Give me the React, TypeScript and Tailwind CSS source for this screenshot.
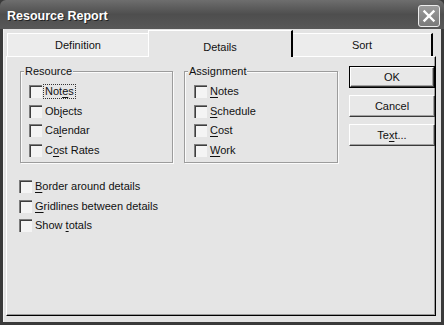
import React from "react";

const font = { fontFamily: '"Liberation Sans", Arial, sans-serif' };

function U({ children }: { children: React.ReactNode }) {
  return <span className="underline underline-offset-[2px] decoration-[1px]">{children}</span>;
}

function Box() {
  return (
    <span className="w-[13px] h-[13px] shrink-0 bg-[#f4f4f4] border-t border-l border-[#7c7c7c] border-b-white border-r-white shadow-[inset_1px_1px_0_#3e3e3e]" />
  );
}

function Check({ children, focus = false }: { children: React.ReactNode; focus?: boolean }) {
  return (
    <div className="h-[19.5px] flex items-center gap-px">
      <Box />
      <span
        className={
          "px-px leading-[13px] border " +
          (focus ? "border-dotted border-[#333]" : "border-transparent")
        }
      >
        {children}
      </span>
    </div>
  );
}

function Group({
  title,
  width,
  pl,
  children,
}: {
  title: string;
  width: string;
  pl: string;
  children: React.ReactNode;
}) {
  return (
    <div
      className={
        "relative h-[92px] border border-[#9c9c9c] shadow-[1px_1px_0_#fbfbfb,inset_1px_1px_0_#fbfbfb] pt-[10px] " +
        width +
        " " +
        pl
      }
    >
      <span className="absolute -top-[8px] left-[3px] px-px bg-[#e5e5e5] leading-[14px]">{title}</span>
      {children}
    </div>
  );
}

function Button({ children, def = false }: { children: React.ReactNode; def?: boolean }) {
  return (
    <div
      className={
        "w-[86px] h-[22px] flex items-center justify-center " +
        (def ? "border border-black" : "")
      }
    >
      <div className="w-full h-full flex items-center justify-center bg-[#e8e8e8] border-t border-l border-white border-b border-r border-b-[#3a3a3a] border-r-[#3a3a3a] shadow-[inset_-1px_-1px_0_#a2a2a2]">
        {children}
      </div>
    </div>
  );
}

export default function App() {
  return (
    <div
      className="w-[444px] h-[325px] bg-[#3a3a3a] flex flex-col text-[11px] text-[#111]"
      style={font}
    >
      <div className="h-[29px] shrink-0 flex items-start bg-gradient-to-b from-[#6e6e6e] via-[#4e4e4e] to-[#585858] rounded-t-[6px]">
        <span className="ml-[7px] mt-[9px] text-[12.5px] font-bold text-white leading-[15px] [text-shadow:1px_1px_0_#222]">
          Resource Report
        </span>
        <div className="ml-auto mr-[4px] mt-[5px] w-[22px] h-[22px] rounded-[3px] border border-[#ececec] bg-gradient-to-b from-[#9c9c9c] to-[#7a7a7a] flex items-center justify-center">
          <svg width="14" height="14" viewBox="0 0 14 14">
            <path d="M2.5 2.5 L11.5 11.5 M11.5 2.5 L2.5 11.5" stroke="white" strokeWidth="2.4" strokeLinecap="square" />
          </svg>
        </div>
      </div>

      <div className="flex-1 mx-[3px] mb-[3px] bg-[#e3e3e3] border-l border-[#f2f2f2] pl-[2px] pt-px">
        <div className="relative z-10 h-[26px] flex items-end pl-px">
          <div className="w-[141px] h-[23px] bg-[#ececec] border-t border-l border-white flex items-center justify-center pt-px">
            Definition
          </div>
          <div className="w-[145px] h-[27px] -mb-px bg-[#e5e5e5] border-t border-l border-white border-r-2 border-r-black flex items-start justify-center pt-[8px]">
            Details
          </div>
          <div className="w-[140px] h-[23px] bg-[#ececec] border-t border-white border-r-2 border-r-black flex items-center justify-center pt-px">
            Sort
          </div>
        </div>

        <div className="w-[430px] h-[260px] bg-[#e5e5e5] border-t border-l border-white border-r border-b border-r-black border-b-black shadow-[inset_-1px_-1px_0_#9a9a9a]">
          <div className="flex items-start pt-[9px] pl-[13px]">
            <div className="flex flex-col">
              <div className="flex items-start gap-[11px] mt-[5px]">
                <Group title="Resource" width="w-[153px]" pl="pl-[8px]">
                  <Check focus>
                    Not<U>e</U>s
                  </Check>
                  <Check>
                    Ob<U>j</U>ects
                  </Check>
                  <Check>
                    Ca<U>l</U>endar
                  </Check>
                  <Check>
                    C<U>o</U>st Rates
                  </Check>
                </Group>
                <Group title="Assignment" width="w-[154px]" pl="pl-[9px]">
                  <Check>
                    <U>N</U>otes
                  </Check>
                  <Check>
                    <U>S</U>chedule
                  </Check>
                  <Check>
                    <U>C</U>ost
                  </Check>
                  <Check>
                    <U>W</U>ork
                  </Check>
                </Group>
              </div>
              <div className="mt-[14px] -ml-px">
                <Check>
                  <U>B</U>order around details
                </Check>
                <Check>
                  <U>G</U>ridlines between details
                </Check>
                <Check>
                  Show <U>t</U>otals
                </Check>
              </div>
            </div>
            <div className="ml-[11px] flex flex-col gap-[7px]">
              <Button def>OK</Button>
              <Button>Cancel</Button>
              <Button>
                Te<U>x</U>t...
              </Button>
            </div>
          </div>
        </div>
      </div>
    </div>
  );
}
